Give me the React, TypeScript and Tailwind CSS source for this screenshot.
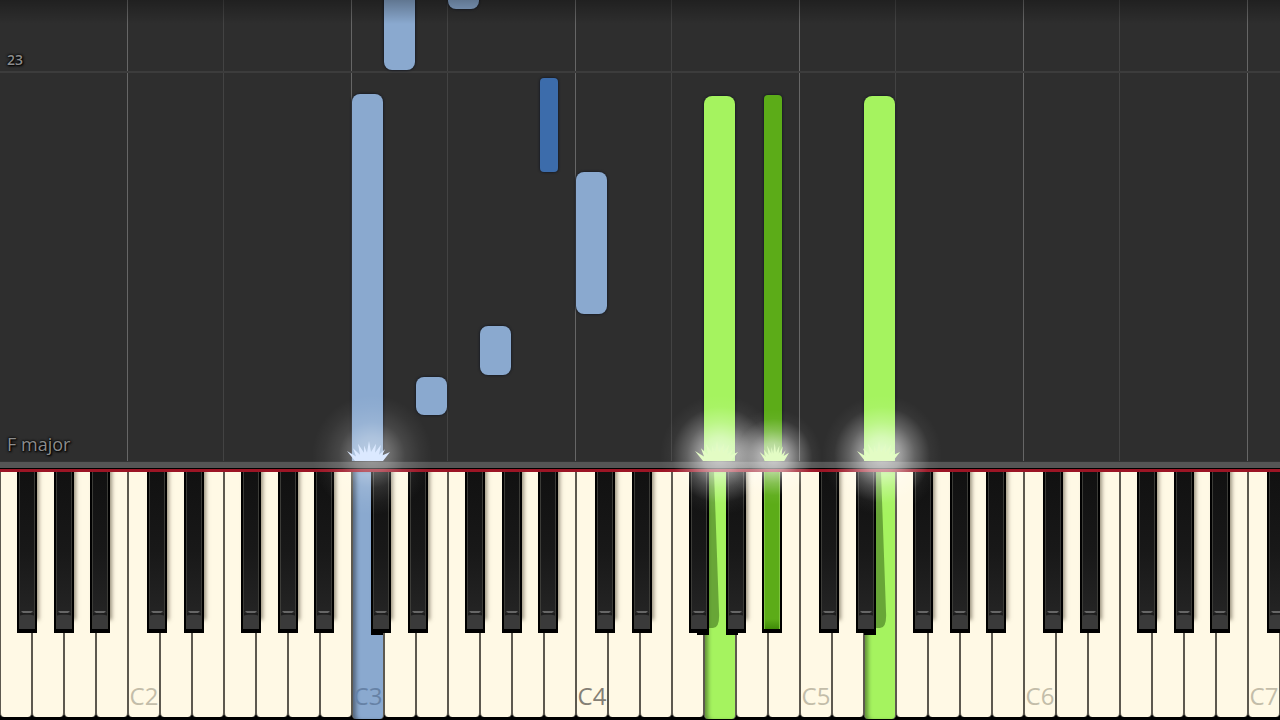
import { clsx } from 'clsx';

type Hand = 'left' | 'right';

interface Note {
  // position and width in white-key units, height and distance to the bar in pixels
  key: number;
  span: number;
  bottom: number;
  height: number;
  hand: Hand;
  sharp?: boolean;
}

interface Spark {
  key: number;
  hand: Hand;
  small?: boolean;
}

const WHITE_KEYS = 40;
const LETTERS = ['C', 'D', 'E', 'F', 'G', 'A', 'B'];

const notes: Note[] = [
  { key: 14, span: 1, bottom: 452, height: 40, hand: 'left' },
  { key: 12, span: 1, bottom: 391, height: 100, hand: 'left' },
  { key: 11, span: 1, bottom: 0, height: 367, hand: 'left' },
  { key: 16.875, span: 0.59375, bottom: 289, height: 94, hand: 'left', sharp: true },
  { key: 18, span: 1, bottom: 147, height: 142, hand: 'left' },
  { key: 15, span: 1, bottom: 86, height: 49, hand: 'left' },
  { key: 13, span: 1, bottom: 46, height: 38, hand: 'left' },
  { key: 22, span: 1, bottom: 0, height: 365, hand: 'right' },
  { key: 23.875, span: 0.59375, bottom: 0, height: 366, hand: 'right', sharp: true },
  { key: 27, span: 1, bottom: 0, height: 365, hand: 'right' },
];

const sparks: Spark[] = [
  { key: 11.5, hand: 'left' },
  { key: 22.375, hand: 'right' },
  { key: 24.1875, hand: 'right', small: true },
  { key: 27.4375, hand: 'right' },
];

const pressed: Record<string, Hand> = {
  C3: 'left',
  G4: 'right',
  'A#4': 'right',
  E5: 'right',
};

const sharpOffset: Record<string, string> = {
  C: 'left-[59.375%]',
  D: 'left-[75%]',
  F: 'left-[53.125%]',
  G: 'left-[68.75%]',
  A: 'left-[81.25%]',
};

const noteColors = {
  left: 'bg-[#8aa9cf]',
  right: 'bg-[#a5f35f]',
};

const sharpNoteColors = {
  left: 'bg-[#3c6cab]',
  right: 'bg-[#5cac18]',
};

const sparkColors = {
  left: '#dbe9ff',
  right: '#e3fcc4',
};

// F to B spans four keys, C to E three; the last column is the lone top C
const columns = [4, 3, 4, 3, 4, 3, 4, 3, 4, 3, 4, 1];

const keys = Array.from({ length: WHITE_KEYS }, (_, i) => {
  const step = i + 3;
  return { letter: LETTERS[step % 7], octave: 1 + Math.floor(step / 7) };
});

function GridLines() {
  return (
    <div className="absolute inset-0 flex">
      {columns.map((span, i) => (
        <div
          key={i}
          style={{ flex: `${span} 0 0` }}
          className={clsx(
            i < columns.length - 1 && 'border-r',
            i % 2 === 0 ? 'border-[#666]' : 'border-[#434343]'
          )}
        />
      ))}
    </div>
  );
}

function Label({ className, children }: { className: string; children: string }) {
  return (
    <p
      className={clsx(
        'absolute left-[7px] text-[#8c8c8c] [text-shadow:0_0_2px_#000,0_0_3px_#000,1px_1px_2px_#000]',
        className
      )}
    >
      {children}
    </p>
  );
}

function Roll() {
  return (
    <section className="relative flex-1 overflow-hidden bg-[#2e2e2e]">
      <GridLines />
      <div className="absolute inset-x-0 bottom-[388px] h-[2px] bg-[#3c3c3c]" />
      {notes.map((note) => (
        <div
          key={note.key}
          className={clsx(
            'absolute shadow-[0_0_2px_1px_#1c1f26]',
            note.bottom === 0
              ? note.sharp ? 'rounded-t' : 'rounded-t-lg'
              : note.sharp ? 'rounded' : 'rounded-lg',
            note.sharp ? sharpNoteColors[note.hand] : noteColors[note.hand]
          )}
          style={{
            left: `${(note.key / WHITE_KEYS) * 100}%`,
            width: `calc(${(note.span / WHITE_KEYS) * 100}% - 1px)`,
            bottom: note.bottom,
            height: note.height,
          }}
        />
      ))}
      <div className="absolute inset-x-0 top-0 h-6 bg-linear-to-b from-black/30 to-transparent" />
      <Label className="bottom-[391px] text-sm font-semibold">23</Label>
      <Label className="bottom-[3px] text-lg">F major</Label>
    </section>
  );
}

function Sparks() {
  return (
    <div className="pointer-events-none absolute inset-x-0 top-0 z-20">
      {sparks.map((spark) => (
        <div
          key={spark.key}
          className="absolute"
          style={{ left: `${(spark.key / WHITE_KEYS) * 100}%` }}
        >
          <svg
            viewBox="0 0 120 120"
            className={clsx(
              'absolute max-w-none',
              spark.small
                ? '-top-[52px] -left-[48px] size-[96px]'
                : '-top-[66px] -left-[56px] size-[120px]'
            )}
          >
            <defs>
              <radialGradient id={`glow-${spark.key}`}>
                <stop offset="0" stopColor="#fff" stopOpacity={spark.hand === 'left' ? 0.42 : 0.72} />
                <stop offset="0.3" stopColor="#fff" stopOpacity={spark.hand === 'left' ? 0.3 : 0.54} />
                <stop offset="0.55" stopColor="#fff" stopOpacity={spark.hand === 'left' ? 0.12 : 0.25} />
                <stop offset="0.8" stopColor="#fff" stopOpacity="0.04" />
                <stop offset="1" stopColor="#fff" stopOpacity="0" />
              </radialGradient>
            </defs>
            <circle cx="60" cy="60" r="60" fill={`url(#glow-${spark.key})`} />
          </svg>
          <svg
            viewBox="0 0 44 22"
            preserveAspectRatio="none"
            className={clsx(
              'absolute max-w-none',
              spark.small
                ? '-top-[18px] -left-[15px] h-[18px] w-[30px]'
                : '-top-[20px] -left-[22px] h-[20px] w-[44px]'
            )}
          >
            <path
              d="M9 22 1 11l9 6-3-9 7 7-2-12 6 10 0-8 3 8 2-13 2 12 5-9-1 10 6-9-2 11 6-6-3 7 8-4-7 10z"
              fill={sparkColors[spark.hand]}
            />
          </svg>
        </div>
      ))}
    </div>
  );
}

function WhiteKey({ name, hand }: { name: string; hand?: Hand }) {
  return (
    <button
      type="button"
      aria-label={name}
      className={clsx(
        'flex w-full items-end justify-center overflow-hidden rounded-b border-x border-[#5d594f] text-2xl leading-none',
        hand ? 'h-[247px] pb-[11px]' : 'h-[245px] pb-[9px]',
        hand ? noteColors[hand] : 'bg-[#fff9e5]',
        hand && 'shadow-[inset_5px_0_4px_-2px_rgba(0,0,0,0.4)]',
        name === 'C4' ? 'text-[#848075]' : hand ? 'text-[#6682a6]' : 'text-[#c3bda9]'
      )}
    >
      {name.startsWith('C') && name}
    </button>
  );
}

interface BlackKeyProps {
  name: string;
  hand?: Hand;
  leftDown: boolean;
  rightDown: boolean;
}

function BlackKey({ name, hand, leftDown, rightDown }: BlackKeyProps) {
  return (
    <button
      type="button"
      aria-label={name}
      className={clsx(
        'absolute top-0 z-10 flex h-[161px] w-[62.5%] flex-col justify-end bg-black px-[2px] pb-1',
        sharpOffset[name[0]],
        !hand && !rightDown && 'shadow-[3px_-12px_4px_-1px_rgba(70,60,40,0.55)]'
      )}
    >
      {rightDown && (
        <svg
          viewBox="0 0 11 158"
          preserveAspectRatio="none"
          className="absolute top-0 left-full h-[158px] w-[11px]"
        >
          <path d="M0 0h5L10 140q1 16-6 16H0z" fill="#2c5a10" fillOpacity="0.5" />
        </svg>
      )}
      {leftDown && <span className="absolute top-full left-0 h-[2px] w-3/5 bg-black" />}
      {rightDown && <span className="absolute top-full right-0 h-[2px] w-3/5 bg-black" />}
      {hand ? (
        <span className="flex w-full flex-1 flex-col justify-end border-x border-[#7dc53e] bg-[#5cac18]">
          <span className="h-[10px] w-full bg-linear-to-b from-[#5cac18] to-[#3f8a08]" />
        </span>
      ) : (
        <span className="flex w-full flex-1 flex-col justify-end border-x border-[#3c3c38] bg-linear-to-b from-[#111] via-[#181818] to-[#272727]">
          <svg viewBox="0 0 14 20" className="h-5 w-full" preserveAspectRatio="none">
            <path d="M0 3h14v17H0z" fill="#2a2a2a" />
            <path d="M0 20V7q7-5 14 0v13z" fill="#3a3a3a" />
            <path d="M1 2h12l-2 2H3z" fill="#666" />
            <path d="M0 5h14" stroke="#111" strokeWidth="1" />
          </svg>
        </span>
      )}
    </button>
  );
}

function Keyboard() {
  return (
    <section className="flex h-[248px] overflow-hidden bg-black">
      {keys.map(({ letter, octave }) => {
        const name = `${letter}${octave}`;
        const next = `${LETTERS[(LETTERS.indexOf(letter) + 1) % 7]}${octave}`;

        return (
          <div key={name} className="relative min-w-0 flex-1">
            <WhiteKey name={name} hand={pressed[name]} />
            {sharpOffset[letter] && (
              <BlackKey
                name={`${letter}#${octave}`}
                hand={pressed[`${letter}#${octave}`]}
                leftDown={name in pressed}
                rightDown={next in pressed}
              />
            )}
          </div>
        );
      })}
    </section>
  );
}

export default function App() {
  return (
    <main className="flex min-h-screen flex-col overflow-hidden bg-black font-['Open_Sans',sans-serif]">
      <Roll />
      <div className="relative">
        <Sparks />
        <div className="h-[7px] border-t border-[#333] bg-[#555]" />
        <div className="h-px bg-black" />
        <div className="h-[3px] bg-[#9c1525]" />
        <Keyboard />
      </div>
    </main>
  );
}
